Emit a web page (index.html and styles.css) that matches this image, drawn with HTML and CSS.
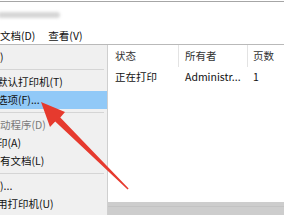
FILE: index.html
```html
<!DOCTYPE html>
<html>
<head>
<meta charset="utf-8">
<link rel="stylesheet" href="styles.css">
</head>
<body>
<div class="frame">
  <div class="title"><div class="blur"></div></div>
  <div class="menubar"><span class="mb">文档(D)</span><span class="mb">查看(V)</span></div>
  <div class="main">
    <div class="menu">
      <div class="item">)</div>
      <div class="sep"></div>
      <div class="item"><span class="cut">默认打印机(T)</span></div>
      <div class="item hl"><span class="cut">选项(F)...</span></div>
      <div class="sep"></div>
      <div class="item dis">动程序(D)</div>
      <div class="item"><span class="cut">印(A)</span></div>
      <div class="item">有文档(L)</div>
      <div class="sep"></div>
      <div class="item">)...</div>
      <div class="item"><span class="cut">用打印机(U)</span></div>
    </div>
    <div class="list">
      <div class="row head">
        <span class="cell c1">状态</span><span class="cell c2">所有者</span><span class="cell c3">页数</span>
      </div>
      <div class="row">
        <span class="cell c1">正在打印</span><span class="cell c2">Administr...</span><span class="cell c3">1</span>
      </div>
      <div class="fill"></div>
      <div class="scroll"><div class="scroll-line"></div></div>
    </div>
  </div>
</div>
<svg class="arrow" width="284" height="215" viewBox="0 0 284 215">
  <polygon fill="#e63a2e" points="41,102 65,112 60.3,117.4 128.6,188.6 127.6,189.6 55.2,121.6 50,127"/>
</svg>
</body>
</html>
```
FILE: styles.css
```css
html, body {
  margin: 0;
  background: #fff;
}
body {
  padding-top: 1px;
  width: 284px;
  height: 214px;
  overflow: hidden;
  position: relative;
  font-family: "Noto Sans CJK SC", "Liberation Sans", sans-serif;
  font-size: 10.5px;
  color: #111;
}
.frame {
  border-top: 1px solid #a6a6a6;
  height: 213px;
  display: flex;
  flex-direction: column;
  overflow: hidden;
}
.title {
  height: 26px;
  padding-top: 10px;
  box-sizing: border-box;
}
.blur {
  width: 62px;
  height: 6px;
  margin-left: -2px;
  background: #d6d6d6;
  border-radius: 4px;
  filter: blur(1.5px);
}
.menubar {
  height: 16px;
  line-height: 15px;
  display: flex;
  gap: 13px;
  border-bottom: 1px solid #b9b9b9;
  white-space: nowrap;
}
.main {
  flex: 1;
  display: flex;
  min-height: 0;
}
.menu {
  width: 107px;
  border-right: 1px solid #cfcfcf;
  background: #f0f0f0;
  padding-top: 3px;
  display: flex;
  flex-direction: column;
  overflow: hidden;
}
.item {
  height: 18px;
  line-height: 18px;
  white-space: nowrap;
  flex: none;
}
.cut {
  margin-left: -3px;
}
.hl {
  background: #91c9f7;
}
.dis {
  color: #7a7a7a;
}
.sep {
  height: 1px;
  background: #d5d5d5;
  margin: 3px 3px 3px 0;
  flex: none;
}
.list {
  flex: 1;
  display: flex;
  flex-direction: column;
}
.row {
  display: flex;
  white-space: nowrap;
}
.head {
  height: 22px;
  line-height: 22px;
  color: #333;
}
.row:not(.head) {
  height: 19px;
  line-height: 19px;
}
.cell {
  box-sizing: border-box;
  border-right: 1px solid transparent;
  overflow: hidden;
}
.head .cell {
  border-right-color: #e3e3e3;
}
.c1 { width: 71px; padding-left: 7px; }
.c2 { width: 69px; padding-left: 6px; }
.c3 { flex: 1; padding-left: 5px; border-right: none; }
.fill {
  flex: 1;
}
.scroll {
  height: 13px;
  background: #cdcdcd;
  padding-top: 4px;
  box-sizing: border-box;
}
.scroll-line {
  height: 1px;
  background: #c3c3c3;
}
.arrow {
  position: absolute;
  left: 0;
  top: 0;
}
```
